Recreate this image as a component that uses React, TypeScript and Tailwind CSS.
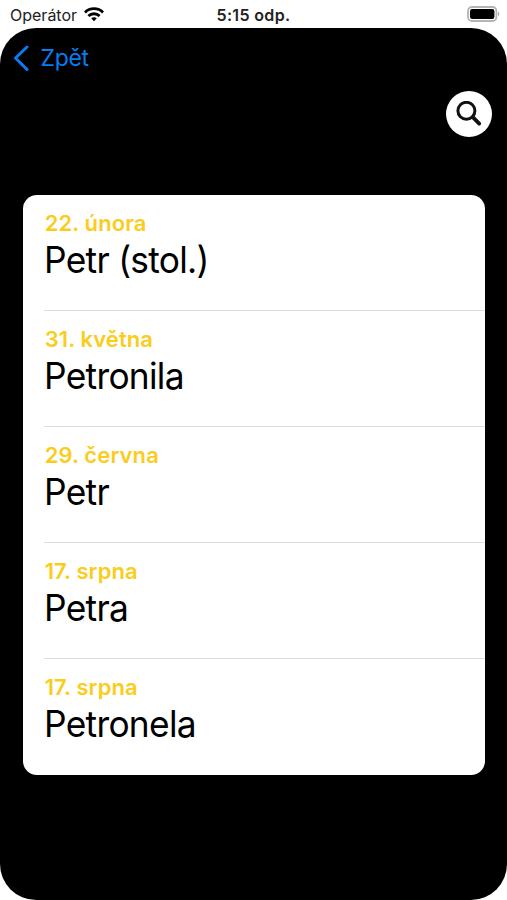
const entries = [
  { date: "22. února", name: "Petr (stol.)" },
  { date: "31. května", name: "Petronila" },
  { date: "29. června", name: "Petr" },
  { date: "17. srpna", name: "Petra" },
  { date: "17. srpna", name: "Petronela" },
];

function StatusBar() {
  return (
    <div className="grid h-7 grid-cols-3 items-center pt-px text-[16px] leading-[27px] text-[#222]">
      <div className="flex items-center gap-[7px] pl-[10px]">
        <span className="pt-px leading-[26px]">Operátor</span>
        <svg width="20" height="15" viewBox="0 0 20 15" fill="none" stroke="#000" strokeWidth="2.8">
          <path d="M1 5.4a12.7 12.7 0 0 1 18 0" />
          <path d="M4.4 9.1a7.9 7.9 0 0 1 11.2 0" />
          <path d="M10 10.2c-1.1 0-2.1.4-2.8 1.1L10 14.2l2.8-2.9c-.7-.7-1.7-1.1-2.8-1.1Z" fill="#000" stroke="none" />
        </svg>
      </div>
      <div className="pt-px text-center leading-[26px] font-semibold tracking-[0.35px]">5:15 odp.</div>
      <div className="flex justify-end pr-[7px] pb-px">
        <svg width="33" height="16" viewBox="0 0 33 16">
          <rect x="1" y="1" width="28.4" height="14" rx="4" fill="#fff" stroke="#b4b4b4" strokeWidth="1.8" />
          <rect x="3" y="3" width="24.4" height="10" rx="2.2" fill="#000" />
          <path d="M31 5.8v4.4c.8-.4 1.3-1.2 1.3-2.2s-.5-1.8-1.3-2.2Z" fill="#a8a8a8" />
        </svg>
      </div>
    </div>
  );
}

export default function App() {
  return (
    <div className="flex h-[900px] w-[507px] flex-col bg-white font-['Inter',sans-serif]">
      <StatusBar />
      <main className="flex-1 rounded-[36px] bg-black">
        <button className="ml-[13px] flex h-[60px] items-center gap-[11.5px] text-[23px] tracking-[-0.3px] text-[#087cf0]">
          <svg width="16" height="27" viewBox="0 0 16 27" fill="none" stroke="currentColor" strokeWidth="3" strokeLinecap="round" strokeLinejoin="round">
            <path d="M14 2 2.5 13 14 24.5" />
          </svg>
          Zpět
        </button>
        <div className="flex justify-end pt-[3px] pr-[15px]">
          <button className="flex size-[46px] items-center justify-center rounded-full bg-white">
            <svg width="26" height="26" viewBox="0 0 26 26" fill="none" stroke="#111" strokeLinecap="round">
              <circle cx="10.4" cy="9.8" r="8.5" strokeWidth="3" />
              <path d="m16.8 16.2 6.4 6.4" strokeWidth="3.8" />
            </svg>
          </button>
        </div>
        <ul className="mx-[22.5px] mt-[58px] h-[580px] rounded-[14px] bg-white pl-[21.5px]">
          {entries.map((e, i) => (
            <li key={i} className="h-[116px] border-b border-[#dcdcde] pt-[14px] last:border-b-0">
              <p className="ml-[0.7px] text-[22px] leading-[28px] font-semibold tracking-[0.1px] text-[#facd1c]">{e.date}</p>
              <p className="-ml-[0.5px] origin-left scale-x-[0.955] text-[37px] leading-[46px] tracking-[-0.75px] text-black">{e.name}</p>
            </li>
          ))}
        </ul>
      </main>
    </div>
  );
}
